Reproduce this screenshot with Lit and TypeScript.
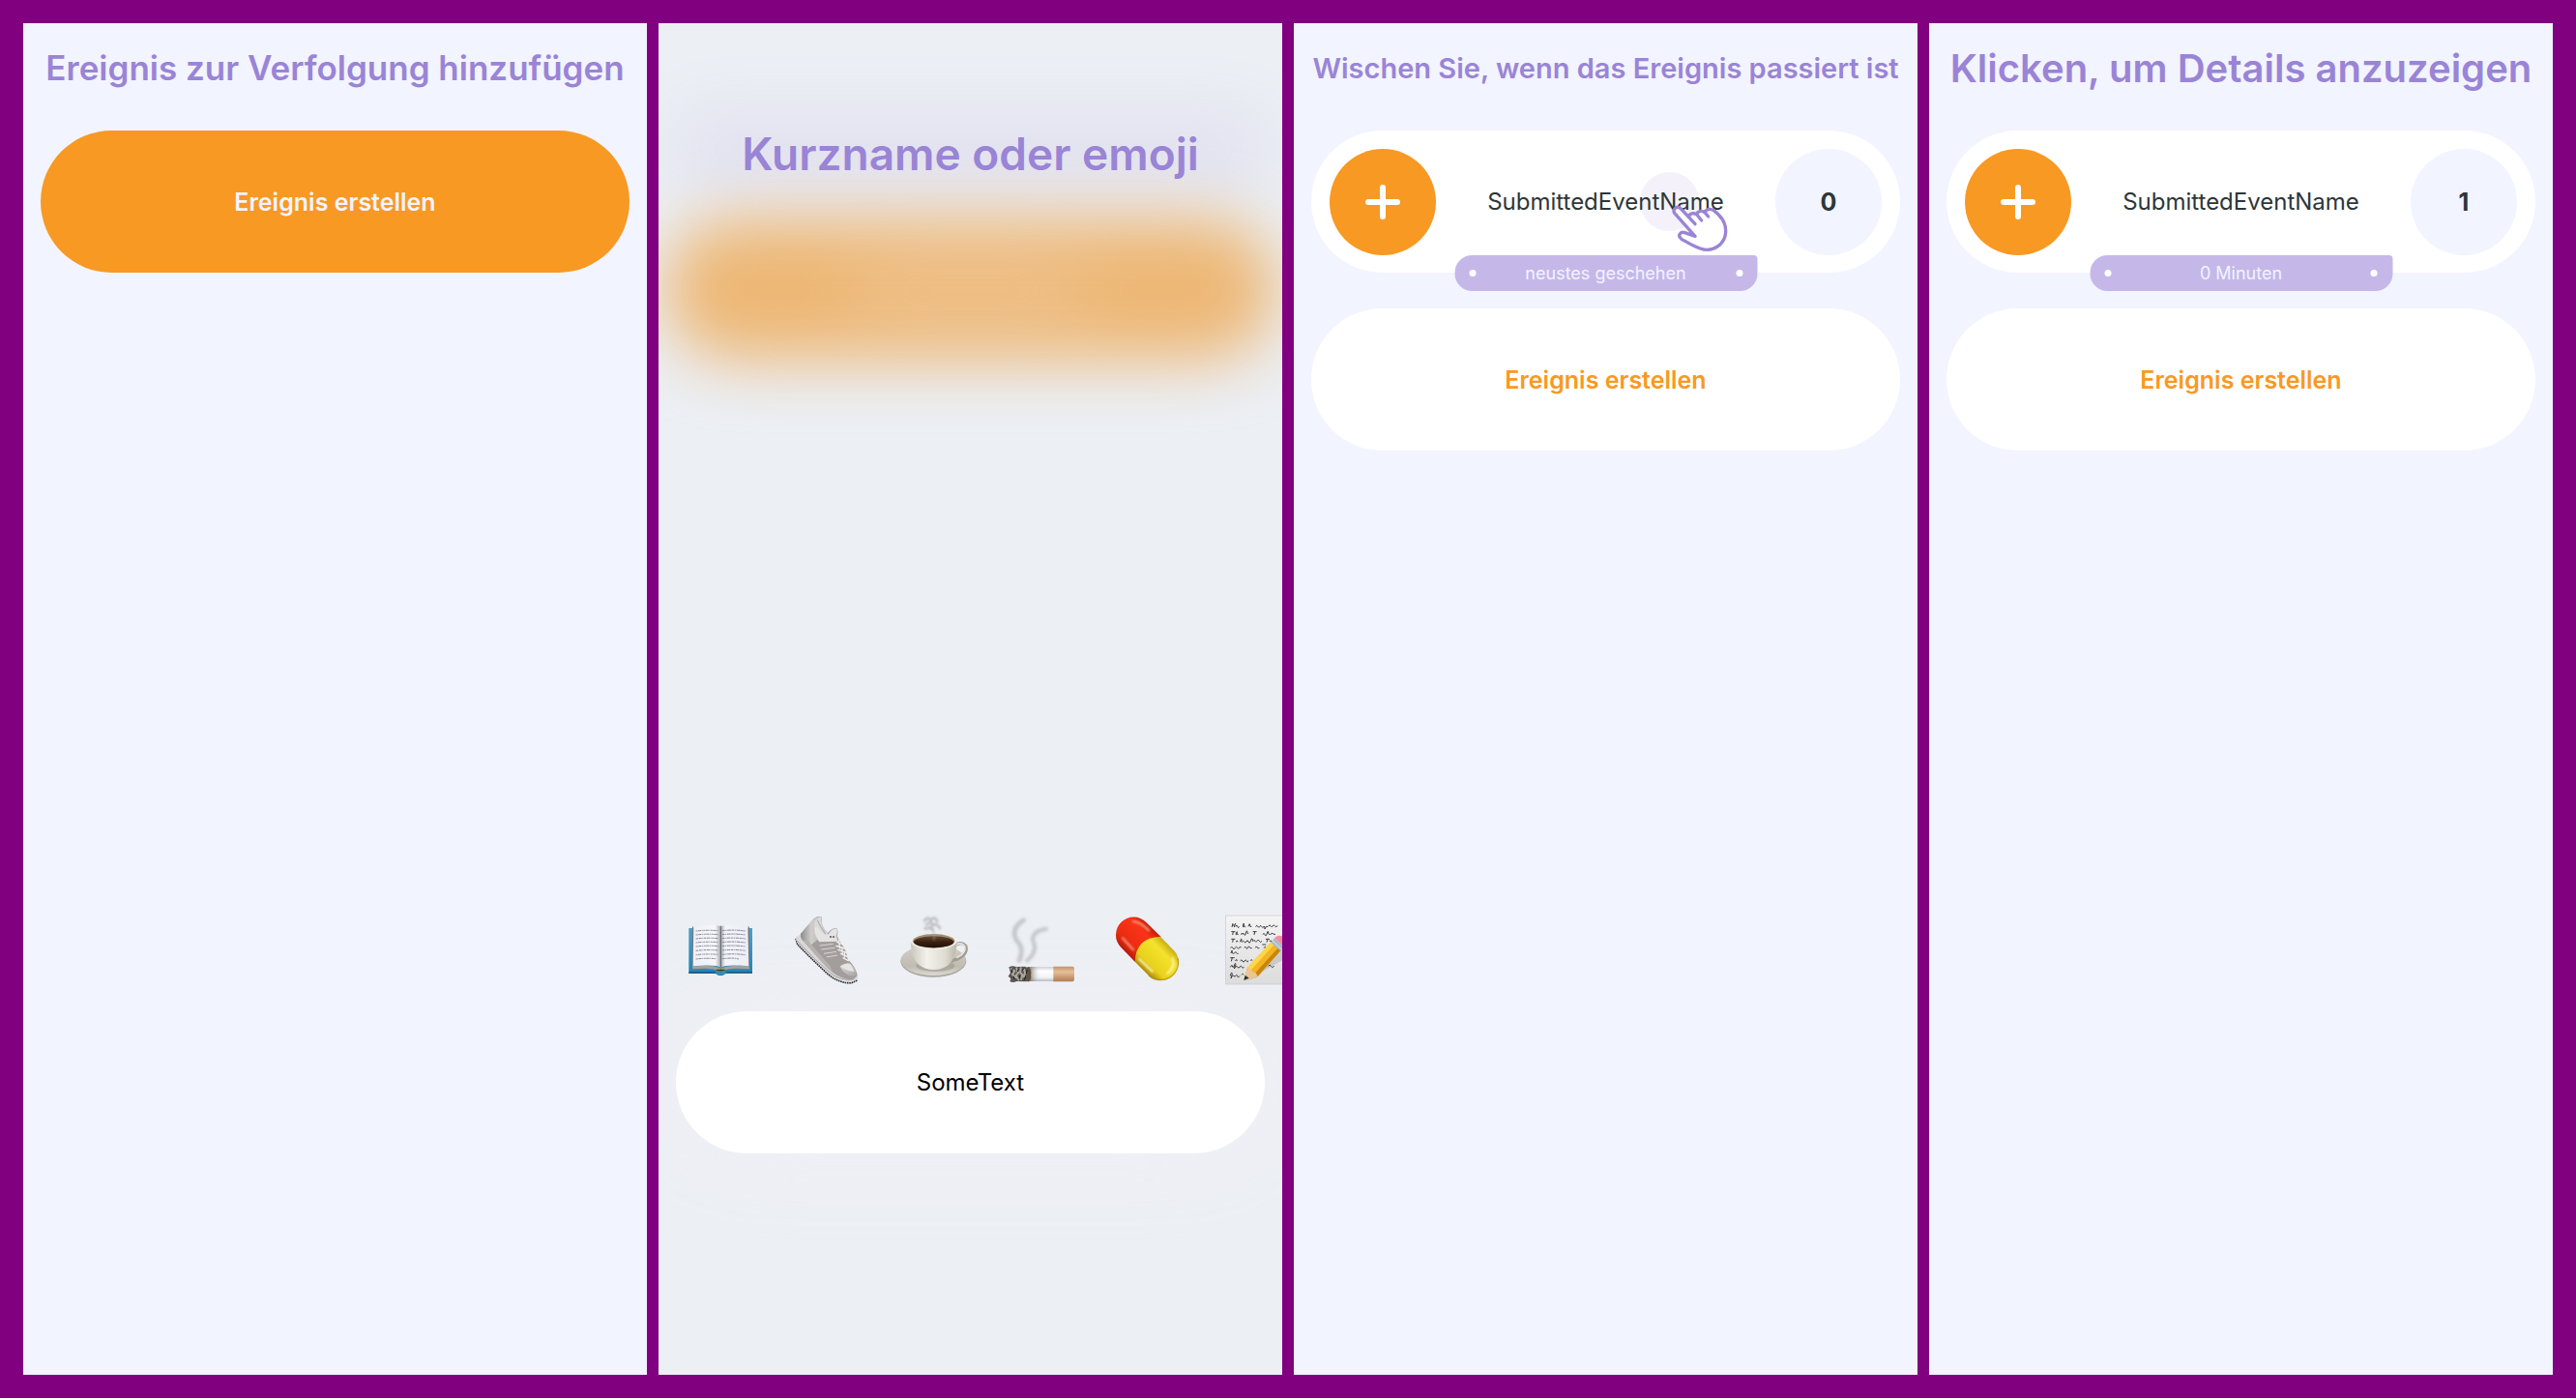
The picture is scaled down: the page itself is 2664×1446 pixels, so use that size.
import { LitElement, html, svg, css, nothing } from "lit";
import { customElement, property } from "lit/decorators.js";

const bookLines = [96, 108, 120, 132, 144, 157, 170, 183];

const book = svg`
  <defs>
    <linearGradient id="cover" x1="0" y1="0" x2="0" y2="1"><stop offset="0" stop-color="#4f9fc4"/><stop offset="1" stop-color="#1f83b4"/></linearGradient>
    <linearGradient id="pageL" x1="0" y1="0" x2="1" y2="0"><stop offset="0" stop-color="#eeeef6"/><stop offset=".8" stop-color="#f6f6fc"/><stop offset="1" stop-color="#a9a9b2"/></linearGradient>
    <linearGradient id="pageR" x1="0" y1="0" x2="1" y2="0"><stop offset="0" stop-color="#a5a5ae"/><stop offset=".15" stop-color="#f4f4fb"/><stop offset="1" stop-color="#ececf5"/></linearGradient>
  </defs>
  <path d="M67 87H264V227H182Q166 240 150 227H67Z" fill="url(#cover)"/>
  <path d="M67 222H150Q166 236 182 222H264V227H182Q166 241 150 228H67Z" fill="#1b5f86"/>
  <path d="M78 84L82 80V204L78 214H150L166 219L182 214H256L251 204V80L255 84V216H78Z" fill="#77777a"/>
  <path d="M79 205Q140 199 166 212Q192 199 254 205L256 214Q196 209 180 217H152Q136 209 78 214Z" fill="#a3a29f"/>
  <path d="M82 79Q150 73 166 82V209Q150 199 80 205Z" fill="url(#pageL)"/>
  <path d="M250 79Q182 73 167 82V209Q182 199 253 205Z" fill="url(#pageR)"/>
  <path d="M166 80V208" stroke="#66666c" stroke-width="3"/>
  <ellipse cx="166" cy="218" rx="15" ry="4" fill="#17455c" stroke="#a58a25" stroke-width="3"/>
  <path d="M150 224Q166 236 182 224" fill="none" stroke="#2b97c8" stroke-width="5"/>
  ${bookLines.map(
    (y, i) => svg`
      <path d="M89 ${y}Q125 ${y - 4} ${i === 7 ? 150 : 159} ${y - 1}" fill="none" stroke="#85858f" stroke-width="3" stroke-dasharray="${5 + (i % 3)} 2 9 2 3 2"/>
      <path d="M171 ${y - 1}Q205 ${y - 5} ${i === 7 ? 222 : 243} ${y}" fill="none" stroke="#85858f" stroke-width="3" stroke-dasharray="${8 - (i % 3)} 2 4 2 11 2"/>`
  )}`;

const shoe = svg`
  <defs>
    <linearGradient id="heel" x1="0" y1="0" x2="1" y2="0"><stop offset="0" stop-color="#8e8a89"/><stop offset=".5" stop-color="#cfcdcd"/><stop offset="1" stop-color="#b9b5b5"/></linearGradient>
    <linearGradient id="toe" x1="0" y1="0" x2="1" y2="1"><stop offset="0" stop-color="#dedcdc"/><stop offset="1" stop-color="#a8a3a2"/></linearGradient>
  </defs>
  <path d="M399 119L404 137Q450 185 500 231Q535 259 572 257L590 249" fill="none" stroke="#2b2929" stroke-width="5" stroke-dasharray="5 2"/>
  <path d="M400 116Q397 124 404 132Q460 192 510 234Q545 258 582 250Q594 245 591 235L585 222L420 100Z" fill="#d9d8d8"/>
  <path d="M402 125Q455 184 507 227Q540 252 580 246" fill="none" stroke="#a6a3a3" stroke-width="3"/>
  <path d="M414 105Q435 80 455 58Q466 48 478 52Q482 60 480 72Q484 92 499 101Q510 86 526 87Q532 96 527 112Q533 126 545 142Q557 160 560 184Q583 205 590 232Q583 250 560 246Q524 238 496 210L419 124Q412 114 414 105Z" fill="#a39d9b"/>
  <path d="M414 105Q435 80 455 58Q466 48 478 52Q482 60 478 70L468 68Q455 82 458 98L466 124L440 144L419 124Q412 114 414 105Z" fill="url(#heel)"/>
  <path d="M458 64Q470 50 478 54Q478 66 480 76Q486 96 499 101L490 118L468 102Q450 84 458 64Z" fill="#dad9da"/>
  <path d="M456 86Q468 78 474 94Q484 108 500 106Q510 88 526 88Q530 98 524 112L530 128L472 130Q456 110 456 86Z" fill="#e4e3e3"/>
  <path d="M466 62Q474 80 492 106" fill="none" stroke="#b3b0b0" stroke-width="4"/>
  <circle cx="507" cy="114" r="3" fill="#565250"/><circle cx="516" cy="114" r="3" fill="#565250"/>
  <path d="M419 124L440 130L505 205L515 226L496 210Z" fill="#b7b2b1"/>
  <path d="M473 141L515 136M478 153L520 148M486 166L525 160M494 177L528 171" stroke="#dbd8d7" stroke-width="3"/>
  <path d="M527 130L546 138M524 142L552 150M530 154L556 163M538 166L560 176M546 180L562 188M532 126L536 150M542 146L544 166M550 160L550 178" stroke="#f1f0f0" stroke-width="4" stroke-linecap="round"/>
  <path d="M536 206Q550 194 566 196Q584 210 588 230Q584 238 570 236Q546 226 536 206Z" fill="url(#toe)"/>
  <path d="M536 205Q555 194 568 199Q578 212 580 222Q560 222 536 205Z" fill="#e6e5e5"/>`;

const coffee = svg`
  <defs>
    <linearGradient id="cup" x1="0" y1="0" x2="1" y2="0"><stop offset="0" stop-color="#c9c6bd"/><stop offset=".35" stop-color="#f3f1ea"/><stop offset=".75" stop-color="#dedbd2"/><stop offset="1" stop-color="#b9b5aa"/></linearGradient>
    <linearGradient id="saucer" x1="0" y1="0" x2="0" y2="1"><stop offset="0" stop-color="#d3d0c8"/><stop offset=".7" stop-color="#c0bcb3"/><stop offset="1" stop-color="#dddad3"/></linearGradient>
    <linearGradient id="brew" x1="0" y1="0" x2="0" y2="1"><stop offset="0" stop-color="#6b4a30"/><stop offset=".5" stop-color="#3a2011"/><stop offset="1" stop-color="#241007"/></linearGradient>
    <filter id="steam" x="-50%" y="-50%" width="200%" height="200%"><feGaussianBlur stdDeviation="3"/></filter>
  </defs>
  <ellipse cx="826" cy="190" rx="102" ry="49" fill="#aaa69c"/>
  <ellipse cx="826" cy="187" rx="101" ry="47" fill="url(#saucer)"/>
  <ellipse cx="832" cy="204" rx="60" ry="18" fill="#9d998e" opacity=".6"/>
  <path d="M886 146Q910 124 926 142Q934 166 902 182L884 188" fill="none" stroke="#a19d93" stroke-width="10" stroke-linecap="round"/>
  <path d="M888 144Q910 126 923 143Q929 164 900 178" fill="none" stroke="#e9e6df" stroke-width="5" stroke-linecap="round"/>
  <path d="M755 126Q756 178 780 200Q800 216 827 216Q856 215 874 200Q898 176 899 126Z" fill="url(#cup)"/>
  <ellipse cx="827" cy="126" rx="73" ry="28" fill="#f1eee7"/>
  <ellipse cx="827" cy="127" rx="65" ry="22" fill="#9a8f81"/>
  <ellipse cx="827" cy="130" rx="62" ry="18" fill="url(#brew)"/>
  <g fill="none" stroke="#a9abb1" stroke-linecap="round" filter="url(#steam)">
    <path d="M798 64Q808 50 818 62Q830 48 838 66M804 76Q818 62 824 78Q838 70 846 88M800 88Q816 84 824 92" stroke-width="8" opacity=".7"/>
    <path d="M816 80Q832 96 828 122" stroke-width="7" opacity=".4"/>
  </g>`;

const cigarette = svg`
  <defs>
    <linearGradient id="paper" x1="0" y1="0" x2="0" y2="1"><stop offset="0" stop-color="#cfd1d6"/><stop offset=".3" stop-color="#ffffff"/><stop offset=".75" stop-color="#f0f1f4"/><stop offset="1" stop-color="#b8b9bd"/></linearGradient>
    <linearGradient id="burn" x1="0" y1="0" x2="1" y2="0"><stop offset="0" stop-color="#55504b" stop-opacity=".8"/><stop offset="1" stop-color="#b9babf" stop-opacity="0"/></linearGradient>
    <linearGradient id="filter" x1="0" y1="0" x2="0" y2="1"><stop offset="0" stop-color="#bf9068"/><stop offset=".35" stop-color="#e8bf9a"/><stop offset="1" stop-color="#ad7d55"/></linearGradient>
    <filter id="smoke" x="-50%" y="-50%" width="200%" height="200%"><feGaussianBlur stdDeviation="5"/></filter>
  </defs>
  <g fill="none" stroke="#b3b5ba" stroke-linecap="round" filter="url(#smoke)" opacity=".7">
    <path d="M146 62Q106 86 122 122Q150 150 132 188" stroke-width="14"/>
    <path d="M216 90Q174 94 174 124Q192 158 156 188" stroke-width="12"/>
  </g>
  <rect x="150" y="207" width="90" height="45" fill="url(#paper)"/>
  <rect x="160" y="207" width="34" height="45" fill="url(#burn)"/>
  <path d="M238 206H297Q303 206 303 212V246Q303 253 297 253H238Z" fill="url(#filter)"/>
  <path d="M100 208Q112 202 122 207L150 206Q172 214 168 232Q172 246 154 253L124 252Q112 258 103 252L106 244L98 236L105 226Z" fill="#5b5650"/>
  <path d="M158 208Q170 216 165 232Q170 244 158 252" fill="none" stroke="#6b4f28" stroke-width="5"/>
  <g fill="none" stroke="#aca89f" stroke-width="6" stroke-linecap="round">
    <path d="M107 213L118 220L111 231L122 240M124 211L129 226L122 234L130 247M137 211L135 224L142 232L138 246M147 214L150 226L146 238"/>
  </g>
  <g fill="none" stroke="#1d1a18" stroke-width="3"><path d="M112 212L108 224M130 213L127 222M142 218L148 210M118 246L114 236M134 234L132 244M152 236L148 248M157 216L154 228"/></g>`;

const pill = svg`
  <defs>
    <linearGradient id="red" gradientUnits="userSpaceOnUse" x1="448" y1="147" x2="526" y2="69"><stop offset="0" stop-color="#b81c08"/><stop offset=".25" stop-color="#ea2c12"/><stop offset=".75" stop-color="#fb3317"/><stop offset="1" stop-color="#c42109"/></linearGradient>
    <linearGradient id="yellow" gradientUnits="userSpaceOnUse" x1="533" y1="233" x2="611" y2="155"><stop offset="0" stop-color="#b08a08"/><stop offset=".25" stop-color="#e9d21b"/><stop offset=".75" stop-color="#f3e22c"/><stop offset="1" stop-color="#cbae14"/></linearGradient>
    <filter id="shine" x="-50%" y="-50%" width="200%" height="200%"><feGaussianBlur stdDeviation="3"/></filter>
  </defs>
  <path d="M491 191L448 147A55 55 0 0 1 526 69L572 114L540 150Z" fill="url(#red)"/>
  <path d="M491 191Q494 116 570 113L611 155A55 55 0 0 1 533 233Z" fill="url(#yellow)"/>
  <path d="M533 233A55 55 0 0 0 624 180" fill="none" stroke="#9c7605" stroke-width="4" opacity=".5"/>
  <g fill="none" stroke-linecap="round" filter="url(#shine)">
    <path d="M453 118L486 154" stroke="#ff9d86" stroke-width="6"/>
    <path d="M486 66Q508 68 534 94" stroke="#ff8d70" stroke-width="7"/>
    <path d="M504 182L546 222" stroke="#fff9c0" stroke-width="6"/>
    <path d="M608 180Q618 206 592 228" stroke="#fff6b0" stroke-width="6"/>
  </g>`;

const memo = svg`
  <defs>
    <linearGradient id="sheet" x1="0" y1="0" x2="0" y2="1"><stop offset="0" stop-color="#f4f4f4"/><stop offset="1" stop-color="#dcdcdc"/></linearGradient>
  </defs>
  <rect x="773" y="48" width="213" height="213" fill="url(#sheet)" stroke="#c9c9cb" stroke-width="2"/>
  <g fill="none" stroke="#3c3c3e" stroke-width="3">
    <path d="M792 84L795 72M799 84L803 72M793 78H801M804 82q3-8 5 0t6 0M826 83q2-12 3-11q2 1-2 11q5-4 8 0M843 82q4-14 5-4q-1 6 5 4M866 83q3-8 6-2t6 2q3-8 6-1t7 0q4-3 3 8q3-10 9-8M905 82q4-8 7-2t6 1q4-7 7-1t9 0"/>
    <path d="M790 98H802M796 98L794 108M804 107q2-10 4-9q1 2-2 9q4-4 6 0M820 107q3-8 5-1q3-7 5 0t5-1q3-14 4-8t4 8M857 98H869M863 98L861 108M888 107q3-8 6 0t6-1q3-13 5-8q-1 6 2 8t8-2q3-4 6 2l6 0"/>
    <path d="M790 121H802M796 121L794 131M805 130q3-9 5 0M818 130q2-13 4-9q-2 7 1 9q4-6 7-1t7 0q3-8 6 0t7-1q3-12 5-8t2 8q4-7 7-1t6 0q4-8 7 0t8 0M897 121H909M903 121L900 131M908 129q4-8 7 0"/>
    <path d="M788 149q4-8 7 0t7-1q4-6 7 0t6 0q3-8 5 0M830 148q4-7 6 0t6-1q2-7 6 0t5 0M865 148q3-8 6-1t6 0M886 138H898M891 149q4-9 7 0"/>
    <path d="M789 165q3-12 4-8q-2 6 1 8t6-1q4-6 7 0t5 1M787 179H800M793 179L790 190M803 189q3-10 5 0M818 189q4-7 7 0t6 0q4-6 7 0t5-1M850 188q3-7 5 0"/>
    <path d="M787 208q6-10 6-4t5 3q4-16 6-8l-5 14q6-12 10-6t7 1q4-7 7 0t6-1M787 235q4-16 6-6l-4 14q3-12 8-8t6 1q4-8 6 0t7-1M822 232q4-7 6 0M905 205q5-8 8 0t10 0"/>
  </g>
  <path d="M838 250L960 180V140L870 240Z" fill="#555" opacity=".18"/>
  <path d="M829 249L840 209L915 128L946 154L872 237Z" fill="#f2b622"/>
  <path d="M840 209L915 128L925 136L850 218Z" fill="#ffd64a"/>
  <path d="M862 229L937 146L946 154L872 237Z" fill="#c98410"/>
  <path d="M829 249L840 209L850 212L856 222L866 226L872 237Z" fill="#ecc592"/>
  <path d="M829 249L833 233L845 242Z" fill="#2c2c2e"/>
  <path d="M912 131L924 118L954 146L943 158Z" fill="#a9bccd"/>
  <path d="M917 125L947 153" stroke="#dce6ef" stroke-width="3"/>
  <path d="M924 118Q932 106 948 112Q962 122 958 138L954 146Z" fill="#f08f9b"/>`;

interface Suggestion { label: string; x: number; art: unknown; }

const suggestions: Suggestion[] = [
  { label: "Buch", x: 0, art: book },
  { label: "Laufschuh", x: 330, art: shoe },
  { label: "Kaffee", x: 660, art: coffee },
  { label: "Zigarette", x: 30, art: cigarette },
  { label: "Pille", x: 360, art: pill },
  { label: "Notiz", x: 690, art: memo },
];

const shared = css`
  :host { display: block; }
  * { box-sizing: border-box; }
  button, input { font: inherit; border: 0; margin: 0; padding: 0; }
  .pill {
    display: flex;
    align-items: center;
    justify-content: center;
    width: 100%;
    height: 147px;
    border-radius: 74px;
    background: #fff;
    font-size: 24px;
    line-height: 32px;
    text-align: center;
  }
`;

@customElement("event-card")
class EventCard extends LitElement {
  @property() name = "";
  @property({ type: Number }) count = 0;
  @property() since = "";
  @property({ type: Boolean }) hint = false;

  static styles = [
    shared,
    css`
      .card { position: relative; justify-content: space-between; padding: 0 19px; color: #2d3639; }
      .add, .count {
        display: grid;
        place-items: center;
        flex: none;
        width: 110px;
        height: 110px;
        border-radius: 50%;
      }
      .add { background: #f89923; }
      .plus { width: 36px; height: 36px; }
      .name { position: relative; font-weight: 400; }
      .count { background: #f2f4ff; font-size: 25px; font-weight: 700; }
      .since {
        position: absolute;
        left: 50%;
        bottom: -19px;
        transform: translateX(-50%);
        display: flex;
        align-items: center;
        justify-content: space-between;
        width: 313px;
        height: 37px;
        padding: 0 15px;
        border-radius: 18px 4px 18px 18px;
        background: #c5b8e9;
        color: #f2f4ff;
        font-size: 18px;
        line-height: 24px;
      }
      .since::before, .since::after {
        content: "";
        width: 7px;
        height: 7px;
        border-radius: 50%;
        background: #fff;
      }
      .touch {
        position: absolute;
        left: calc(50% + 35px);
        top: 43px;
        width: 61px;
        height: 61px;
        border-radius: 50%;
        background: #f4f1fb;
      }
      .hand { position: absolute; left: calc(50% + 66px); top: 72px; width: 63px; height: 57px; }
    `,
  ];

  render() {
    return html`
      <article class="pill card">
        <button class="add" aria-label="Ereignis zählen">
          <svg class="plus" viewBox="0 0 36 36" aria-hidden="true">
            <path d="M18 3V33M3 18H33" stroke="#fff" stroke-width="6" stroke-linecap="round" />
          </svg>
        </button>
        ${this.hint ? html`<span class="touch"></span>` : nothing}
        <span class="name">${this.name}</span>
        <span class="count">${this.count}</span>
        <span class="since">${this.since}</span>
        ${this.hint
          ? html`<svg class="hand" viewBox="200 140 189 171" aria-hidden="true">
              <g fill="#fff" stroke="#9a84d6" stroke-width="10" stroke-linecap="round" stroke-linejoin="round">
                <path d="M278 252L214 180C207 168 222 156 233 166L258 192C262 180 272 179 283 184C288 172 300 172 308 178C314 166 328 166 336 172C352 184 374 208 373 238C372 270 346 294 314 294C290 294 262 276 236 261C222 251 232 236 246 241Z" />
                <path d="M258 192L278 214M283 184L298 203M308 178L319 191" fill="none" />
              </g>
            </svg>`
          : nothing}
      </article>
    `;
  }
}

@customElement("app-root")
class AppRoot extends LitElement {
  static styles = [
    shared,
    css`
      .board {
        display: grid;
        grid-template-columns: repeat(4, minmax(0, 1fr));
        gap: 12px;
        min-height: 100vh;
        padding: 24px;
        background: #800080;
        font-family: Inter, "Liberation Sans", sans-serif;
      }
      .screen {
        position: relative;
        display: flex;
        flex-direction: column;
        padding: 0 18px;
        background: #f2f4ff;
        overflow: hidden;
      }
      .title {
        display: grid;
        place-items: center;
        height: 93px;
        margin: 0 -18px 18px;
        color: #9a84d6;
        font-weight: 600;
        line-height: 1;
        white-space: nowrap;
      }
      .small { font-size: 29px; }
      .medium { font-size: 35px; }
      .large { font-size: 40px; }
      .huge { font-size: 46px; }
      .create { color: #f89923; font-size: 25px; font-weight: 600; }
      .primary { background: #f89923; color: #f2f4ff; }
      .list { display: grid; gap: 37px; }

      .entry { background: #eceff4; padding-top: 88px; padding-bottom: 229px; }
      .entry > * { position: relative; }
      .entry .title { margin-bottom: auto; }
      .entry .glow { position: absolute; border-radius: 74px; }
      .glow-title { left: 10px; right: 10px; top: 90px; height: 80px; background: #9a84d6; opacity: 0.12; filter: blur(32px); }
      .glow-button { left: 6px; right: 6px; top: 202px; height: 147px; background: #edb775; filter: blur(32px); }
      .glow-label { left: 200px; right: 200px; top: 250px; height: 50px; background: #f2f4ff; opacity: 0.2; filter: blur(36px); }
      .glow-input { left: 18px; right: 18px; bottom: 229px; height: 147px; background: #f4f0f8; opacity: 0.8; filter: blur(40px); }
      .suggestions { display: flex; margin: 0 -18px 5px; padding: 0 9px; }
      .emoji { flex: none; width: 110px; height: 110px; background: none; }
      .emoji svg { display: block; width: 100%; height: 100%; }
      .field { color: #000; outline: none; }
    `,
  ];

  render() {
    return html`
      <main class="board">
        <section class="screen">
          <h2 class="title medium">Ereignis zur Verfolgung hinzufügen</h2>
          <button class="pill create primary">Ereignis erstellen</button>
        </section>

        <section class="screen entry">
          <div class="glow glow-title"></div>
          <div class="glow glow-button"></div>
          <div class="glow glow-label"></div>
          <div class="glow glow-input"></div>
          <h2 class="title huge">Kurzname oder emoji</h2>
          <div class="suggestions">
            ${suggestions.map(
              (s) => html`<button class="emoji" aria-label=${s.label}>
                <svg viewBox="${s.x} 0 330 330" aria-hidden="true">${s.art}</svg>
              </button>`
            )}
          </div>
          <input class="pill field" type="text" aria-label="Kurzname oder emoji" .value=${"SomeText"} />
        </section>

        <section class="screen">
          <h2 class="title small">Wischen Sie, wenn das Ereignis passiert ist</h2>
          <div class="list">
            <event-card name="SubmittedEventName" count="0" since="neustes geschehen" hint></event-card>
            <button class="pill create">Ereignis erstellen</button>
          </div>
        </section>

        <section class="screen">
          <h2 class="title large">Klicken, um Details anzuzeigen</h2>
          <div class="list">
            <event-card name="SubmittedEventName" count="1" since="0 Minuten"></event-card>
            <button class="pill create">Ereignis erstellen</button>
          </div>
        </section>
      </main>
    `;
  }
}
